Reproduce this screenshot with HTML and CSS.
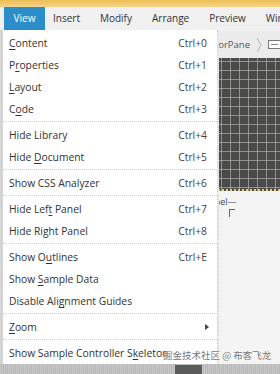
FILE: index.html
```html
<!DOCTYPE html>
<html>
<head>
<meta charset="utf-8">
<link rel="stylesheet" href="styles.css">
</head>
<body>
<div class="app">
  <div class="topstrip"></div>
  <div class="menubar">
    <div class="mitem active">View</div>
    <div class="mitem">Insert</div>
    <div class="mitem">Modify</div>
    <div class="mitem">Arrange</div>
    <div class="mitem">Preview</div>
    <div class="mitem">Window</div>
  </div>
  <div class="workspace">
    <div class="leftpanel"></div>
    <div class="canvas">
      <div class="crumbs">
        <span class="crumb">AnchorPane</span>
        <svg class="chev" width="6" height="16" viewBox="0 0 6 16"><path d="M1 1 L5 8 L1 15" fill="none" stroke="#b5b5b5" stroke-width="1"/></svg>
        <span class="cicon"><span class="cbar"></span></span>
      </div>
      <div class="grid"></div>
      <div class="lower">
        <div class="lowtext">Label—</div>
        <div class="bracket"></div>
      </div>
    </div>
  </div>
  <div class="bottomband"><div class="darkbox"></div></div>

  <div class="dropdown">
    <div class="row"><span><u>C</u>ontent</span><span class="sc">Ctrl+0</span></div>
    <div class="row"><span>P<u>r</u>operties</span><span class="sc">Ctrl+1</span></div>
    <div class="row"><span><u>L</u>ayout</span><span class="sc">Ctrl+2</span></div>
    <div class="row"><span>C<u>o</u>de</span><span class="sc">Ctrl+3</span></div>
    <div class="sep"></div>
    <div class="row"><span>Hide Library</span><span class="sc">Ctrl+4</span></div>
    <div class="row"><span>Hide <u>D</u>ocument</span><span class="sc">Ctrl+5</span></div>
    <div class="sep"></div>
    <div class="row"><span>Show CSS Analyzer</span><span class="sc">Ctrl+6</span></div>
    <div class="sep"></div>
    <div class="row"><span>Hide Lef<u>t</u> Panel</span><span class="sc">Ctrl+7</span></div>
    <div class="row"><span>Hide Right Panel</span><span class="sc">Ctrl+8</span></div>
    <div class="sep"></div>
    <div class="row"><span>Show O<u>u</u>tlines</span><span class="sc">Ctrl+E</span></div>
    <div class="row"><span>Show <u>S</u>ample Data</span></div>
    <div class="row"><span>Disable Ali<u>g</u>nment Guides</span></div>
    <div class="sep"></div>
    <div class="row"><span><u>Z</u>oom</span><span class="arrow"></span></div>
    <div class="sep"></div>
    <div class="row"><span>Show Sample Controller S<u>k</u>eleton</span></div>
  </div>
  <div class="watermark">掘金技术社区 @ 布客飞龙</div>
</div>
</body>
</html>
```
FILE: styles.css
```css
* { box-sizing: border-box; }
html, body { margin: 0; padding: 0; }
body { background: #f0f0f0; font-family: "Open Sans", "Noto Sans", sans-serif; }
.app { position: relative; width: 280px; height: 374px; overflow: hidden; background: #e9e9e9; display: flex; flex-direction: column; }
.topstrip { height: 7px; background: linear-gradient(#efbe55, #f5d48a); }
.menubar { height: 23px; display: flex; background: #f0f0f0; padding-left: 4px; font-size: 10px; color: #333; white-space: nowrap; overflow: hidden; }
.mitem { flex: none; padding: 0 10px; line-height: 23px; }
.mitem.active { background: #2b8ecb; color: #fff; width: 41px; text-align: center; padding: 0; margin-right: -2px; }
.workspace { flex: 1; display: flex; }
.leftpanel { width: 3px; background: #d4d4d4; }
.canvas { flex: 1; display: flex; flex-direction: column; background: #f4f4f4; overflow: hidden; }
.crumbs { height: 27px; margin-top: 1px; background: #ebebeb; display: flex; align-items: center; justify-content: flex-end; font-size: 9.5px; color: #555; gap: 6px; white-space: nowrap; }
.chev { flex: none; }
.cicon { flex: none; width: 16px; height: 9px; border: 1px solid #7a7a7a; margin-right: -4px; background: #fff; display: flex; align-items: center; padding-left: 2px; }
.cbar { width: 7px; height: 1px; background: #888; }
.grid { height: 133px; background-color: #4a4a49;
  background-image: linear-gradient(90deg, rgba(190,190,190,0.6) 1px, transparent 1px), linear-gradient(rgba(190,190,190,0.6) 1px, transparent 1px);
  background-size: 9px 9px; background-position: 2px 3px; border-bottom: 2px dotted #e0cc86; }
.lower { flex: 1; font-size: 9px; color: #444; display: flex; flex-direction: column; align-items: flex-start; padding-left: 202px; }
.lowtext { padding-top: 4px; }
.bracket { width: 6px; height: 8px; border-left: 1px solid #666; border-top: 1px solid #666; margin-left: 24px; margin-top: 1px; }
.bottomband { height: 10px; background: repeating-linear-gradient(90deg, #cacaca 0 1px, #b6b6b6 1px 2px); position: relative; }
.darkbox { position: absolute; left: 175px; top: 1px; width: 27px; height: 9px; background: #5a5a5a; }

.dropdown { position: absolute; left: 3px; top: 30px; width: 215px; height: 334px; background: #fff; padding-top: 2px;
  border-right: 1px dotted #c8c8c8; box-shadow: 1px 0 0 #e4e4e4; font-size: 10.3px; color: #333; }
.row { height: 22px; display: flex; align-items: center; justify-content: space-between; padding: 0 10px 0 6px; }
.row u { text-decoration: underline; text-underline-offset: 2px; }
.sc { color: #444; }
.sep { height: 3px; border-top: 1px dotted #d0d0d0; margin-top: 1px; }
.arrow { width: 0; height: 0; border-left: 4px solid #444; border-top: 3px solid transparent; border-bottom: 3px solid transparent; margin-right: -2px; }
.watermark { position: absolute; left: 163px; top: 348px; font-family: "Noto Sans CJK SC", sans-serif; font-size: 9.5px; color: #777; white-space: nowrap; text-shadow: 0 0 1px #fff; }
```
